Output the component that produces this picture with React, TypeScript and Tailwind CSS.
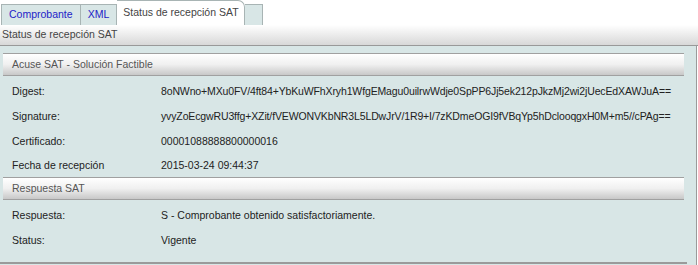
import React from "react";

const font = { fontFamily: '"Liberation Sans", Arial, sans-serif' };

function Row({ label, value, h = "h-[25px]", tight = false }: { label: string; value: string; h?: string; tight?: boolean }) {
  return (
    <div className={`flex items-center ${h} text-[10.5px] text-[#222]`}>
      <div className="w-[158px] pl-[9px] shrink-0">{label}</div>
      <div className={tight ? "whitespace-nowrap tracking-[-0.13px]" : "whitespace-nowrap"}>{value}</div>
    </div>
  );
}

function SectionHeader({ title }: { title: string }) {
  return (
    <div className="h-[23px] border-t border-b border-[#a0a0a0] bg-gradient-to-b from-white via-[#f0f0f0] to-[#c8c8c8] flex items-center pl-[9px] text-[10.5px] text-[#555]">
      {title}
    </div>
  );
}

export default function App() {
  return (
    <div className="w-[698px] h-[265px] bg-white overflow-hidden" style={font}>
      {/* Tabs */}
      <div className="h-[25px] flex items-end pl-[1px]">
        <div className="h-[21px] border border-b-0 border-[#a8b4b4] bg-[#d8e6e6] px-[7px] flex items-center text-[10.5px] text-[#2323c8]">
          Comprobante
        </div>
        <div className="h-[21px] border border-l-0 border-b-0 border-[#a8b4b4] bg-[#d8e6e6] px-[7px] flex items-center text-[10.5px] text-[#2323c8]">
          XML
        </div>
        <div className="h-[25px] border border-l-0 border-b-0 border-[#a8b4b4] bg-white rounded-tr-[7px] pl-[6px] pr-[5px] flex items-center text-[10.5px] text-[#444]">
          Status de recepción SAT
        </div>
        <div className="h-[21px] w-[18px] border border-l-0 border-b-0 border-[#a8b4b4] bg-[#d8e6e6]" />
      </div>
      {/* Title bar */}
      <div className="h-[21px] w-[698px] border-b border-[#999] bg-gradient-to-b from-white to-[#d8d8d8] flex items-center pl-[2px] text-[10.5px] text-[#444]">
        Status de recepción SAT
      </div>
      {/* Content */}
      <div className="w-[697px] h-[219px] bg-[#d8e6e6] border-r border-[#9a9a9a]">
        <div className="w-[687px] h-[218px] border-b-2 border-[#9a9a9a] pt-[7px] pl-[3px]">
          <div className="w-[681px]">
            <SectionHeader title="Acuse SAT - Solución Factible" />
            <div className="pt-[3px]">
              <Row tight label="Digest:" value="8oNWno+MXu0FV/4ft84+YbKuWFhXryh1WfgEMagu0uilrwWdje0SpPP6Jj5ek212pJkzMj2wi2jUecEdXAWJuA==" />
              <Row tight label="Signature:" value="yvyZoEcgwRU3ffg+XZit/fVEWONVKbNR3L5LDwJrV/1R9+I/7zKDmeOGI9fVBqYp5hDclooqgxH0M+m5//cPAg==" />
              <Row label="Certificado:" value="00001088888800000016" />
              <Row label="Fecha de recepción" value="2015-03-24 09:44:37" h="h-[23px]" />
            </div>
            <SectionHeader title="Respuesta SAT" />
            <div className="pt-[3px]">
              <Row label="Respuesta:" value="S - Comprobante obtenido satisfactoriamente." />
              <Row label="Status:" value="Vigente" />
            </div>
          </div>
        </div>
      </div>
    </div>
  );
}
